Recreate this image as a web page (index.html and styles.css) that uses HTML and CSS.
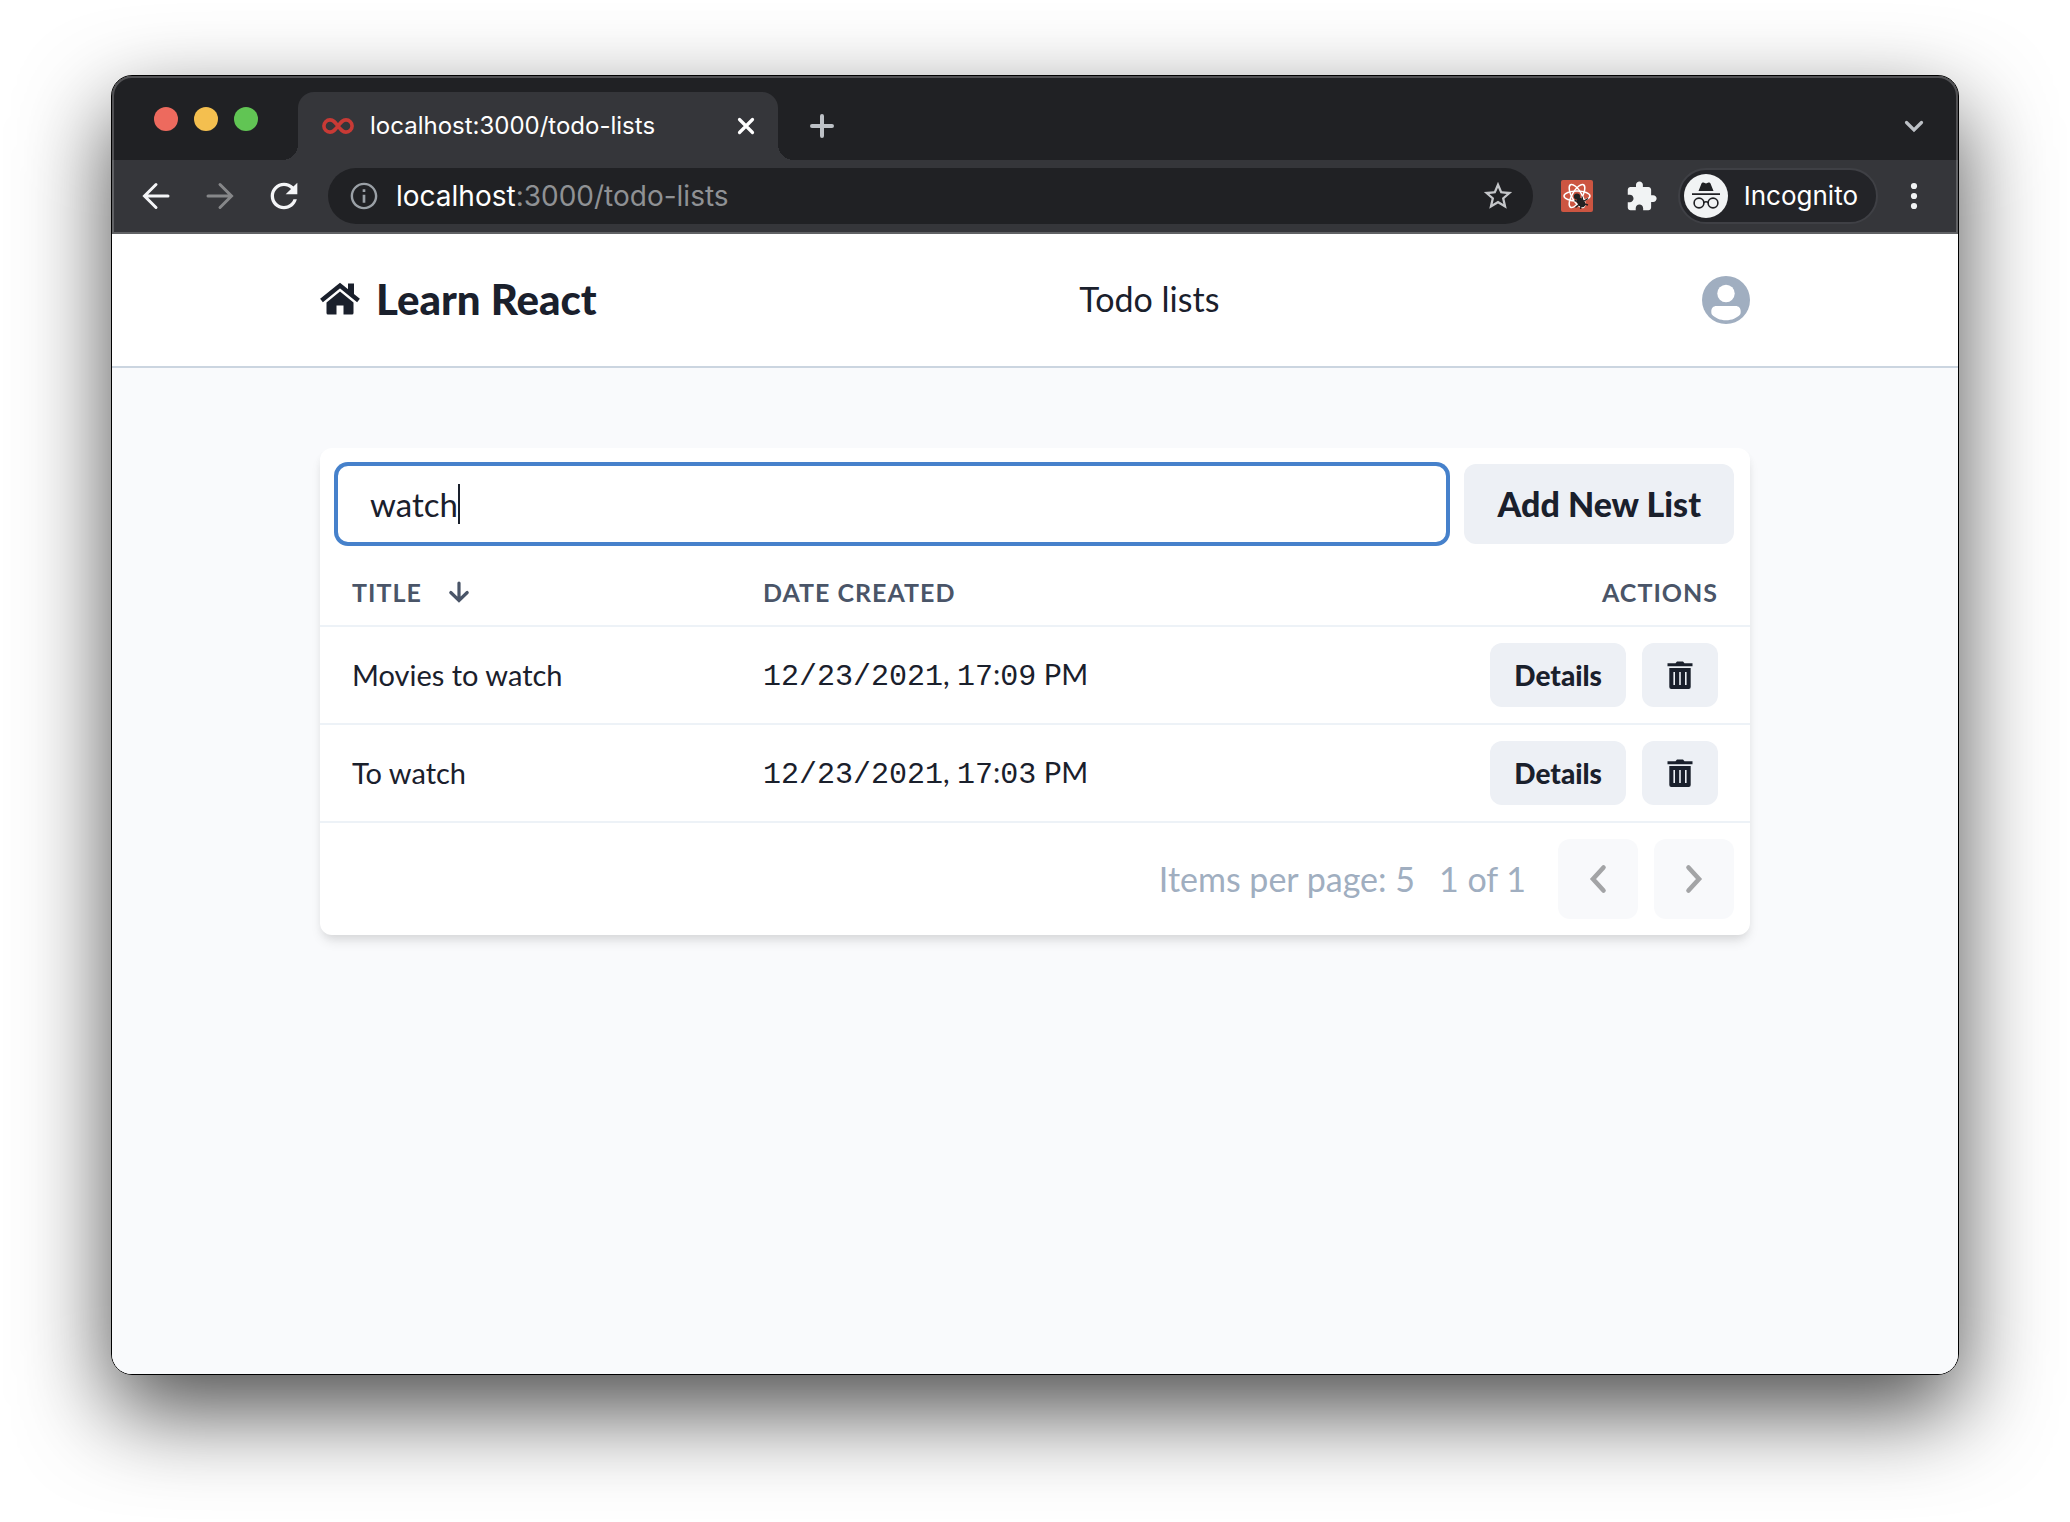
FILE: index.html
```html
<!DOCTYPE html>
<html lang="en">
<head>
<meta charset="utf-8">
<title>Learn React</title>
<link rel="stylesheet" href="styles.css">
</head>
<body>
<div class="window">
  <div class="chrome">
    <div class="tabstrip">
      <div class="lights"><span class="light red"></span><span class="light yellow"></span><span class="light green"></span></div>
      <div class="tab">
        <svg class="favicon" width="32" height="32" viewBox="0 0 32 32"><path d="M16 16C13 12 11.500 9.900 8 9.900A6.100 6.100 0 0 0 8 22.100C11.500 22.100 13 20 16 16C19 12 20.500 9.900 24 9.900A6.100 6.100 0 0 1 24 22.100C20.500 22.100 19 20 16 16Z" fill="none" stroke="#c83a35" stroke-width="3.600"/></svg>
        <span class="tab-title">localhost:3000/todo-lists</span>
        <button class="icon-button" aria-label="Close tab"><svg width="20" height="20" viewBox="0 0 20 20"><path d="M3.500 3.500l13 13m0-13l-13 13" stroke="#fff" stroke-width="3.200" stroke-linecap="round"/></svg></button>
      </div>
      <button class="icon-button new-tab" aria-label="New tab"><svg width="24" height="24" viewBox="0 0 24 24"><path d="M12 2v20M2 12h20" stroke="#bdc1c6" stroke-width="4" stroke-linecap="round"/></svg></button>
      <button class="icon-button tab-search" aria-label="Search tabs"><svg width="20" height="20" viewBox="0 0 20 20"><path d="M2.500 6.500l7.500 7.500 7.500-7.500" fill="none" stroke="#bdc1c6" stroke-width="3.200" stroke-linecap="round"/></svg></button>
    </div>
    <div class="toolbar">
      <button class="icon-button" aria-label="Back"><svg width="28" height="28" viewBox="0 0 28 28"><path d="M26 14H3M14 2.500L2.500 14 14 25.500" fill="none" stroke="#f4f5f7" stroke-width="3" stroke-linecap="round"/></svg></button>
      <button class="icon-button forward" aria-label="Forward"><svg width="28" height="28" viewBox="0 0 28 28"><path d="M2 14h23M14 2.500L25.500 14 14 25.500" fill="none" stroke="#868789" stroke-width="3" stroke-linecap="round"/></svg></button>
      <button class="icon-button reload" aria-label="Reload"><svg width="40" height="40" viewBox="0 0 24 24"><path fill="#f4f5f7" d="M17.650 6.350C16.200 4.900 14.210 4 12 4c-4.420 0-7.990 3.580-7.990 8s3.570 8 7.990 8c3.730 0 6.840-2.550 7.730-6h-2.080c-.82 2.330-3.040 4-5.650 4-3.310 0-6-2.690-6-6s2.690-6 6-6c1.660 0 3.140.69 4.220 1.780L13 11h7V4l-2.350 2.350z"/></svg></button>
      <div class="omnibox">
        <svg width="32" height="32" viewBox="0 0 24 24"><path fill="#9aa0a6" d="M11 7h2v2h-2zm0 4h2v6h-2zm1-9C6.480 2 2 6.480 2 12s4.480 10 10 10 10-4.480 10-10S17.520 2 12 2zm0 18.200c-4.500 0-8.200-3.700-8.200-8.200S7.500 3.800 12 3.800s8.200 3.700 8.200 8.200-3.700 8.200-8.200 8.200z"/></svg>
        <span class="url"><span class="host">localhost</span>:3000/todo-lists</span>
        <button class="icon-button" aria-label="Bookmark this tab"><svg width="34" height="34" viewBox="0 0 24 24"><path fill="#c4c6c9" d="M22 9.240l-7.190-.62L12 2 9.190 8.630 2 9.240l5.460 4.730L5.820 21 12 17.270 18.180 21l-1.630-7.030L22 9.240zM12 15.400l-3.760 2.270 1-4.280-3.320-2.880 4.380-.38L12 6.100l1.710 4.040 4.380.38-3.320 2.880 1 4.280L12 15.400z"/></svg></button>
      </div>
      <button class="icon-button extension" aria-label="React Developer Tools"><svg width="32" height="32" viewBox="0 0 32 32"><rect width="32" height="32" rx="2" fill="#cc5541"/><g fill="none" stroke="#fff" stroke-width="1.500"><ellipse cx="16" cy="16" rx="13" ry="5"/><ellipse cx="16" cy="16" rx="13" ry="5" transform="rotate(60 16 16)"/><ellipse cx="16" cy="16" rx="13" ry="5" transform="rotate(120 16 16)"/></g><g fill="#222" stroke="#222" stroke-width="1.400"><circle cx="16" cy="16.500" r="2.400"/><ellipse cx="20" cy="22.500" rx="3" ry="4.600" transform="rotate(-35 20 22.500)"/><path fill="none" d="M13.500 20.500l3.500 1m-2.500 6l3.500-3M21 16.500l.5 3.500m5.500-1.500l-4 2.500m4 4l-3.500-1M19.500 29l.5-3"/></g></svg></button>
      <button class="icon-button puzzle" aria-label="Extensions"><svg width="33" height="33" viewBox="0 0 24 24"><path fill="#f1f3f4" d="M20.500 11H19V7c0-1.100-.9-2-2-2h-4V3.500C13 2.120 11.880 1 10.500 1S8 2.120 8 3.500V5H4c-1.100 0-1.990.9-1.990 2v3.800H3.500c1.490 0 2.700 1.210 2.700 2.700s-1.210 2.700-2.700 2.700H2V20c0 1.100.9 2 2 2h3.800v-1.500c0-1.490 1.210-2.700 2.700-2.700 1.490 0 2.700 1.210 2.700 2.700V22H17c1.100 0 2-.9 2-2v-4h1.500c1.380 0 2.500-1.120 2.500-2.500S21.880 11 20.500 11z"/></svg></button>
      <button class="incognito"><svg width="44" height="44" viewBox="0 0 44 44"><circle cx="22" cy="22" r="22" fill="#f1f3f4"/><path fill="#202124" d="M14.500 17l3-7.500c.4-1 1.200-1.200 2-.9l2.500.8 2.500-.8c.8-.3 1.600-.1 2 .9l3 7.500zM8 19.200h28v1.800H8z"/><g fill="none" stroke="#202124" stroke-width="1.600"><circle cx="15" cy="29" r="4.900"/><circle cx="29" cy="29" r="4.900"/><path d="M19.800 28.500q2.200-1.500 4.400 0"/></g></svg><span>Incognito</span></button>
      <button class="icon-button" aria-label="Menu"><svg width="12" height="28" viewBox="0 0 12 28"><g fill="#f1f3f4"><circle cx="6" cy="4" r="3.100"/><circle cx="6" cy="14" r="3.100"/><circle cx="6" cy="24" r="3.100"/></g></svg></button>
    </div>
  </div>
  <div class="page">
    <header class="site-header">
      <div class="container header-row">
        <a class="brand" href="#"><svg width="40" height="34" viewBox="0 0 40 34"><path fill="none" stroke="#1a202c" stroke-width="4.400" d="M1.500 18.500L20 3.500l18.500 15"/><path fill="#1a202c" d="M28 1.500h6v13l-6-5zM20 9.500l13.500 11V31a1.500 1.500 0 0 1-1.500 1.500h-8.500V23.500h-7v9H8A1.500 1.500 0 0 1 6.500 31V20.500z"/></svg><span>Learn React</span></a>
        <nav><a class="nav-link" href="#">Todo lists</a></nav>
        <button class="icon-button" aria-label="Account"><svg width="48" height="48" viewBox="0 0 48 48"><circle cx="24" cy="24" r="24" fill="#a0aec0"/><circle cx="24" cy="17.500" r="8.700" fill="#fff"/><path fill="#fff" d="M14.500 30h19c3.300 0 5.200 2.200 5.200 5.400 0 1-.1 2-.4 2.800-3.400 3.900-8.500 6-14.300 6s-10.900-2.100-14.300-6c-.3-.8-.4-1.800-.4-2.800 0-3.200 1.900-5.400 5.200-5.400z"/></svg></button>
      </div>
    </header>
    <main class="container">
      <section class="card">
        <div class="controls">
          <div class="search"><input class="search-input" type="text" aria-label="Search lists" value="watch"><span class="caret"></span></div>
          <button class="button">Add New List</button>
        </div>
        <table class="lists">
          <thead>
            <tr><th class="col-title" scope="col"><span class="sort">Title <svg width="22" height="22" viewBox="0 0 22 22"><path fill="none" stroke="#4a5568" stroke-width="3.200" stroke-linecap="round" d="M11 2v16M2.800 11.500l8.200 8 8.200-8"/></svg></span></th><th scope="col">Date created</th><th class="col-actions" scope="col">Actions</th></tr>
          </thead>
          <tbody>
            <tr><td>Movies to watch</td><td><span class="num">12/23/2021</span>, <span class="num">17</span>:<span class="num">09</span> PM</td><td><div class="actions"><button class="button small">Details</button><button class="button small" aria-label="Delete Movies to watch"><svg class="trash" width="28" height="28" viewBox="0 0 28 28"><path fill="#1a202c" fill-rule="evenodd" d="M1.500 2.200h8l1.500-1.700h6l1.500 1.700h8v3h-25zM3.300 7h21.400v19a2 2 0 0 1-2 2H5.300a2 2 0 0 1-2-2zM7.400 11v13h1.600V11zM13.200 11v13h1.600V11zM19 11v13h1.600V11z"/></svg></button></div></td></tr>
            <tr><td>To watch</td><td><span class="num">12/23/2021</span>, <span class="num">17</span>:<span class="num">03</span> PM</td><td><div class="actions"><button class="button small">Details</button><button class="button small" aria-label="Delete To watch"><svg class="trash" width="28" height="28" viewBox="0 0 28 28"><path fill="#1a202c" fill-rule="evenodd" d="M1.500 2.200h8l1.500-1.700h6l1.500 1.700h8v3h-25zM3.300 7h21.400v19a2 2 0 0 1-2 2H5.300a2 2 0 0 1-2-2zM7.400 11v13h1.600V11zM13.200 11v13h1.600V11zM19 11v13h1.600V11z"/></svg></button></div></td></tr>
          </tbody>
        </table>
        <div class="pager">
          <span class="per-page">Items per page: 5</span>
          <span class="count">1 of 1</span>
          <button class="button square" disabled aria-label="Previous page"><svg width="32" height="32" viewBox="0 0 32 32"><path fill="none" stroke="#a3a4a6" stroke-width="4.600" stroke-linecap="round" d="M21.500 4.500L11 16l10.500 11.500"/></svg></button>
          <button class="button square" disabled aria-label="Next page"><svg width="32" height="32" viewBox="0 0 32 32"><path fill="none" stroke="#a3a4a6" stroke-width="4.600" stroke-linecap="round" d="M10.500 4.500L21 16 10.500 27.500"/></svg></button>
        </div>
      </section>
    </main>
  </div>
</div>
</body>
</html>
```

FILE: styles.css
```css
* { box-sizing: border-box; }

body {
  margin: 0;
  min-height: 100vh;
  padding: 75px 111px 147px;
  display: flex;
  flex-direction: column;
  background: #fff;
  color: #1a202c;
  font: 29px/40px Lato, sans-serif;
}

button { border: 0; margin: 0; padding: 0; background: none; color: inherit; font: inherit; }
a { color: inherit; text-decoration: none; }
svg { display: block; flex: none; }
.icon-button { flex: none; }

.window {
  flex: 1;
  display: flex;
  flex-direction: column;
  border: 1px solid #000;
  border-radius: 21px;
  overflow: hidden;
  box-shadow: 0 36px 90px rgba(0, 0, 0, .7);
}

/* Browser chrome */
.chrome {
  position: relative;
  background: #35363a;
  color: #fff;
  font-family: Inter, sans-serif;
}
.chrome::after {
  content: "";
  position: absolute;
  inset: 0;
  border: 2px solid rgba(255, 255, 255, .22);
  border-radius: 20px 20px 0 0;
  pointer-events: none;
}
.tabstrip {
  display: flex;
  align-items: center;
  height: 84px;
  padding: 16px 34px 0 42px;
  background: #202124;
}
.lights { display: flex; gap: 16px; align-self: flex-start; margin: 15px 40px 0 0; }
.light { width: 24px; height: 24px; border-radius: 50%; }
.red { background: #ed6a5e; }
.yellow { background: #f4bf4f; }
.green { background: #61c554; }
.tab {
  position: relative;
  display: flex;
  align-items: center;
  width: 480px;
  height: 68px;
  padding: 0 22px 0 24px;
  background: #35363a;
  border-radius: 16px 16px 0 0;
}
.tab::before, .tab::after {
  content: "";
  position: absolute;
  bottom: 0;
  width: 16px;
  height: 16px;
}
.tab::before { right: 100%; background: radial-gradient(circle at 0 0, transparent 16px, #35363a 16px); }
.tab::after { left: 100%; background: radial-gradient(circle at 100% 0, transparent 16px, #35363a 16px); }
.tab-title { flex: 1; margin-left: 16px; font-size: 24px; line-height: 32px; }
.new-tab { margin-left: 32px; }
.tab-search { margin-left: auto; }

.toolbar {
  display: flex;
  align-items: center;
  height: 74px;
  padding: 0 38px 2px 30px;
}
.forward { margin-left: 36px; }
.reload { margin-left: 30px; }
.omnibox {
  flex: 1;
  display: flex;
  align-items: center;
  height: 56px;
  margin-left: 24px;
  padding: 0 18px 0 20px;
  border-radius: 28px;
  background: #202124;
}
.url { flex: 1; margin-left: 16px; font-size: 28px; line-height: 40px; color: #8f9194; }
.host { color: #fff; }
.extension { margin-left: 28px; }
.puzzle { margin-left: 32px; }
.incognito {
  display: flex;
  align-items: center;
  gap: 16px;
  height: 56px;
  margin: 0 30px 0 20px;
  padding: 0 18px 0 4px;
  border: 2px solid #3f4045;
  border-radius: 28px;
  background: #232428;
  font-size: 26px;
}

/* Application */
.page { flex: 1; background: #f9fafc; }
.container { max-width: 1430px; margin: 0 auto; }
.site-header { background: #fff; border-bottom: 2px solid #cbd5e0; }
.header-row { display: flex; align-items: center; justify-content: space-between; height: 132px; }
.brand { display: flex; align-items: center; gap: 16px; padding-bottom: 2px; font-size: 42px; line-height: 48px; font-weight: 900; }
.nav-link { font-size: 34px; }

.card {
  margin-top: 80px;
  border-radius: 12px;
  background: #fff;
  box-shadow: 0 8px 12px -2px rgba(0, 0, 0, .1), 0 4px 8px -2px rgba(0, 0, 0, .06);
}
.controls { display: flex; gap: 16px; padding: 16px; }
.search { position: relative; flex: 1; }
.search-input {
  display: block;
  width: 100%;
  height: 80px;
  padding: 0 32px;
  border: 2px solid #4681cb;
  border-radius: 12px;
  outline: 0;
  box-shadow: 0 0 0 2px #4681cb;
  background: #fff;
  color: inherit;
  font: inherit;
  font-size: 33px;
}
.caret { position: absolute; left: 122px; top: 20px; width: 2px; height: 40px; background: #1a202c; }
.button {
  height: 80px;
  padding: 0 33px;
  border-radius: 12px;
  background: #edf0f5;
  font-size: 34px;
  font-weight: 900;
}
.small { height: 64px; padding: 0 24px; font-size: 28px; }
.square { width: 80px; padding: 0 24px; background: #f8f9fb; }

.lists { width: 100%; border-collapse: collapse; text-align: left; }
.lists th {
  height: 66px;
  padding: 0 32px 2px;
  border-bottom: 2px solid #edf2f7;
  color: #4a5568;
  font-size: 25px;
  line-height: 32px;
  letter-spacing: 1px;
  text-transform: uppercase;
}
.lists td { height: 98px; padding: 0 32px; border-bottom: 2px solid #edf2f7; }
.lists .col-title { width: 411px; }
.lists .col-actions { text-align: right; }
.sort { display: flex; align-items: center; gap: 26px; }
.num { font: 30px/40px "Liberation Mono", monospace; }
.actions { display: flex; justify-content: flex-end; gap: 16px; }

.pager {
  display: flex;
  align-items: center;
  justify-content: flex-end;
  gap: 16px;
  padding: 16px;
  color: #a0aec0;
  font-size: 34px;
}
.count { margin: 0 16px 0 8px; }
```
